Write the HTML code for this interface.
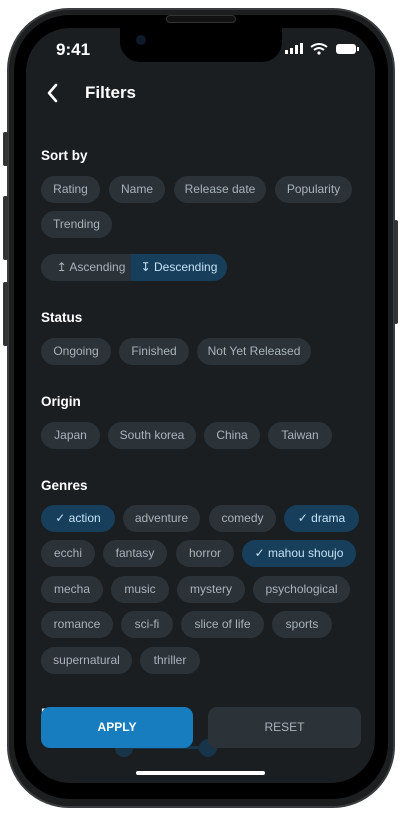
<!DOCTYPE html><html><head><meta charset="utf-8"><style>
*{margin:0;padding:0;box-sizing:border-box}
body{width:414px;height:813px;background:#fff;position:relative;overflow:hidden;font-family:"Liberation Sans",sans-serif}
.a{position:absolute}
.phone{left:7px;top:8px;width:388px;height:800px;border-radius:62px;background:#1c1e20;border:2px solid #3a3c3f}
.bezel{left:14px;top:15px;width:374px;height:784px;border-radius:56px;background:#000}
.screen{left:26px;top:28px;width:349px;height:755px;border-radius:44px;background:#1a1e21;overflow:hidden}
.notch{left:120px;top:28px;width:162px;height:34px;background:#000;border-radius:0 0 20px 20px}
.c{position:absolute;height:27px;border-radius:14px;background:#2b3338;color:#a9b3ba;font-size:12px;line-height:27px;text-align:center;white-space:nowrap}
.s{background:#173f5c;color:#c5e2f6}
.h{position:absolute;left:41px;color:#fff;font-weight:bold;font-size:13.5px}
</style></head><body>
<div class="a phone"></div>
<div class="a" style="left:3px;top:132px;width:5px;height:34px;background:#333;border-radius:2px"></div>
<div class="a" style="left:3px;top:196px;width:5px;height:64px;background:#333;border-radius:2px"></div>
<div class="a" style="left:3px;top:282px;width:5px;height:64px;background:#333;border-radius:2px"></div>
<div class="a" style="left:394px;top:220px;width:4px;height:104px;background:#333;border-radius:2px"></div>
<div class="a bezel"></div>
<div class="a screen"></div>
<div class="a notch"></div>
<div class="a" style="left:166px;top:15px;width:70px;height:8px;border-radius:4px;background:#111;border:1px solid #333"></div>
<div class="a" style="left:136px;top:35px;width:10px;height:10px;border-radius:5px;background:#0d1a2a"></div>
<div class="a" style="left:56px;top:40px;color:#fff;font-size:17px;font-weight:bold">9:41</div>
<svg class="a" style="left:285px;top:42px" width="75" height="14" viewBox="0 0 75 14">
<rect x="0" y="8" width="3" height="4" fill="#fff"/><rect x="5" y="6" width="3" height="6" fill="#fff"/><rect x="10" y="3" width="3" height="9" fill="#fff"/><rect x="15" y="1" width="3" height="11" fill="#fff"/>
<path d="M26 5 Q34 -1 42 5 M29 8 Q34 4 39 8" stroke="#fff" stroke-width="2" fill="none"/><circle cx="34" cy="11" r="1.6" fill="#fff"/>
<rect x="51" y="2" width="20" height="10" rx="3" fill="#fff"/><rect x="72" y="5" width="2" height="4" fill="#fff"/></svg>
<svg class="a" style="left:44px;top:83px" width="16" height="20"><path d="M12 2 L5 10 L12 18" stroke="#fff" stroke-width="2.6" fill="none" stroke-linecap="round" stroke-linejoin="round"/></svg>
<div class="a" style="left:85px;top:83px;color:#fff;font-weight:bold;font-size:17px">Filters</div>
<div class="h" style="top:148px">Sort by</div>
<div class="c" style="left:41px;top:176px;width:59px">Rating</div>
<div class="c" style="left:109px;top:176px;width:56px">Name</div>
<div class="c" style="left:174px;top:176px;width:92px">Release date</div>
<div class="c" style="left:275px;top:176px;width:77px">Popularity</div>
<div class="c" style="left:41px;top:211px;width:71px">Trending</div>
<div class="c" style="left:41px;top:254px;width:100px;border-radius:14px 0 0 14px">↥ Ascending</div>
<div class="c s" style="left:131px;top:254px;width:96px;border-radius:0 14px 14px 0">↧ Descending</div>
<div class="h" style="top:310px">Status</div>
<div class="c" style="left:41px;top:338px;width:70px">Ongoing</div>
<div class="c" style="left:119px;top:338px;width:70px">Finished</div>
<div class="c" style="left:197px;top:338px;width:114px">Not Yet Released</div>
<div class="h" style="top:394px">Origin</div>
<div class="c" style="left:41px;top:422px;width:59px">Japan</div>
<div class="c" style="left:108px;top:422px;width:88px">South korea</div>
<div class="c" style="left:204px;top:422px;width:56px">China</div>
<div class="c" style="left:268px;top:422px;width:64px">Taiwan</div>
<div class="h" style="top:478px">Genres</div>
<div class="c s" style="left:41px;top:505px;width:74px">✓ action</div>
<div class="c" style="left:123px;top:505px;width:77px">adventure</div>
<div class="c" style="left:209px;top:505px;width:67px">comedy</div>
<div class="c s" style="left:284px;top:505px;width:75px">✓ drama</div>
<div class="c" style="left:41px;top:540px;width:54px">ecchi</div>
<div class="c" style="left:103px;top:540px;width:64px">fantasy</div>
<div class="c" style="left:176px;top:540px;width:58px">horror</div>
<div class="c s" style="left:242px;top:540px;width:114px">✓ mahou shoujo</div>
<div class="c" style="left:41px;top:576px;width:62px">mecha</div>
<div class="c" style="left:111px;top:576px;width:58px">music</div>
<div class="c" style="left:177px;top:576px;width:68px">mystery</div>
<div class="c" style="left:253px;top:576px;width:97px">psychological</div>
<div class="c" style="left:41px;top:611px;width:72px">romance</div>
<div class="c" style="left:121px;top:611px;width:52px">sci-fi</div>
<div class="c" style="left:181px;top:611px;width:83px">slice of life</div>
<div class="c" style="left:272px;top:611px;width:60px">sports</div>
<div class="c" style="left:41px;top:647px;width:91px">supernatural</div>
<div class="c" style="left:140px;top:647px;width:60px">thriller</div>
<div class="h" style="top:706px">Release Year</div>
<div class="a" style="left:124px;top:746px;width:84px;height:3px;background:#173448"></div>
<div class="a" style="left:115px;top:739px;width:18px;height:18px;border-radius:9px;background:#173448"></div>
<div class="a" style="left:199px;top:739px;width:18px;height:18px;border-radius:9px;background:#173448"></div>
<div class="a" style="left:41px;top:707px;width:152px;height:41px;border-radius:9px;background:#177dbf;color:#fff;font-size:12px;font-weight:bold;line-height:41px;text-align:center">APPLY</div>
<div class="a" style="left:208px;top:707px;width:153px;height:41px;border-radius:9px;background:#2b3338;color:#a9b3ba;font-size:12px;line-height:41px;text-align:center">RESET</div>
<div class="a" style="left:136px;top:771px;width:129px;height:4px;border-radius:2px;background:#fff"></div>
</body></html>
